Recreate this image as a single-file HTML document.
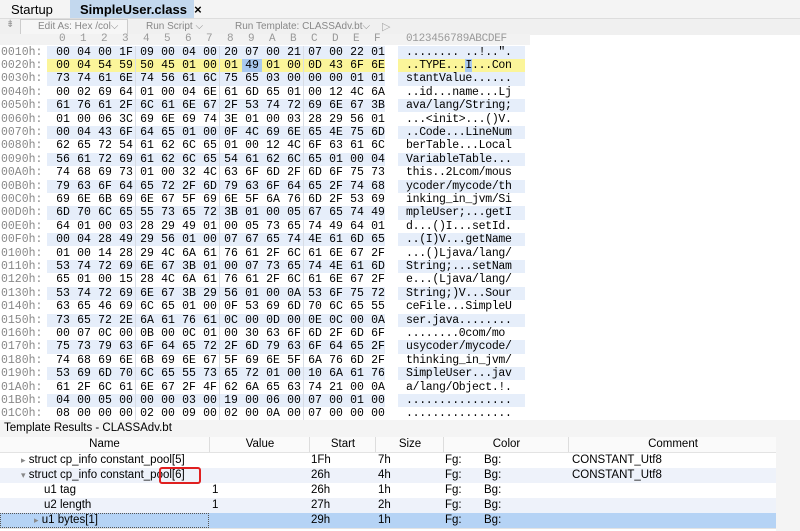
<!DOCTYPE html><html><head><style>
body{margin:0;width:800px;height:531px;overflow:hidden;background:#fff;font-family:"Liberation Sans",sans-serif;position:relative}
.a{position:absolute}
.m{font-family:"Liberation Mono",monospace;font-size:11.5px}
.row{position:absolute;left:0;width:530px;height:13.4px;line-height:13.4px}
.row .ad{position:absolute;left:1px;color:#888;width:44px}
.row .hx{position:absolute;left:47px;width:338px;height:13.4px}
.row .as{position:absolute;left:398px;width:127px;height:13.4px;padding-left:8px;box-sizing:border-box;letter-spacing:-0.3px}
.b .hx,.b .as{background:#e6eefa}
.y .hx,.y .as{background:#fbf59a}
.hx span{position:absolute;width:20px;text-align:center}
.tr{position:absolute;left:0;width:776px;height:15px;line-height:15px;font-size:11.5px;border-bottom:1px solid #e3e3e3}
.tr div{position:absolute;top:0}
</style></head><body>
<div class="a" style="left:0;top:0;width:800px;height:18px;background:#f4f4f4"></div>
<div class="a" style="left:11px;top:2px;font-size:13px">Startup</div>
<div class="a" style="left:70px;top:0;width:124px;height:18px;background:#c3d8ee"></div>
<div class="a" style="left:80px;top:2px;font-size:13px;font-weight:bold">SimpleUser.class &nbsp;×</div>
<div class="a" style="left:0;top:18px;width:800px;height:16px;background:#f0f0f0;border-top:1px solid #ddd"></div>
<div class="a" style="left:6px;top:19px;font-size:10px;color:#999">⇟</div>
<div class="a" style="left:20px;top:19px;width:106px;height:14px;border:1px solid #ccc;background:#f6f6f6"></div>
<div class="a" style="left:38px;top:21px;font-size:10px;color:#888">Edit As: Hex /col⌵</div>
<div class="a" style="left:146px;top:21px;font-size:10px;color:#888">Run Script ⌵</div>
<div class="a" style="left:235px;top:21px;font-size:10px;color:#888">Run Template: CLASSAdv.bt⌵</div>
<div class="a" style="left:382px;top:20px;font-size:11px;color:#aaa">▷</div>
<div class="a" style="left:0;top:34px;width:530px;height:11px;background:#f2f2f2"></div>
<div id="hdr" class="a m" style="left:0;top:33px;color:#999;font-size:11px"></div>
<div class="a m" style="left:406px;top:33px;color:#999;font-size:11px;letter-spacing:-0.3px">0123456789ABCDEF</div>
<div id="rows"></div>
<div class="a" style="left:0;top:420px;width:800px;height:111px;background:#f4f4f4"></div>
<div class="a" style="left:4px;top:422px;font-size:11.5px">Template Results - CLASSAdv.bt</div>
<div class="a" style="left:0;top:437px;width:776px;height:94px;background:#fff"></div>
<div class="tr" style="top:437px;background:#fafafa;text-align:center">
<div style="left:0;width:209px">Name</div><div style="left:209px;width:100px;border-left:1px solid #ddd">Value</div><div style="left:309px;width:66px;border-left:1px solid #ddd">Start</div><div style="left:375px;width:68px;border-left:1px solid #ddd">Size</div><div style="left:443px;width:125px;border-left:1px solid #ddd">Color</div><div style="left:568px;width:208px;border-left:1px solid #ddd">Comment</div></div>
<div id="trs"></div>
<div class="a" style="left:159px;top:467px;width:42px;height:17px;border:2px solid #e02020;border-radius:3px;box-sizing:border-box"></div>
<script>
var d=[["0010h","00 04 00 1F 09 00 04 00 20 07 00 21 07 00 22 01","........ ..!..\"."],
["0020h","00 04 54 59 50 45 01 00 01 49 01 00 0D 43 6F 6E","..TYPE...I...Con"],
["0030h","73 74 61 6E 74 56 61 6C 75 65 03 00 00 00 01 01","stantValue......"],
["0040h","00 02 69 64 01 00 04 6E 61 6D 65 01 00 12 4C 6A","..id...name...Lj"],
["0050h","61 76 61 2F 6C 61 6E 67 2F 53 74 72 69 6E 67 3B","ava/lang/String;"],
["0060h","01 00 06 3C 69 6E 69 74 3E 01 00 03 28 29 56 01","...<init>...()V."],
["0070h","00 04 43 6F 64 65 01 00 0F 4C 69 6E 65 4E 75 6D","..Code...LineNum"],
["0080h","62 65 72 54 61 62 6C 65 01 00 12 4C 6F 63 61 6C","berTable...Local"],
["0090h","56 61 72 69 61 62 6C 65 54 61 62 6C 65 01 00 04","VariableTable..."],
["00A0h","74 68 69 73 01 00 32 4C 63 6F 6D 2F 6D 6F 75 73","this..2Lcom/mous"],
["00B0h","79 63 6F 64 65 72 2F 6D 79 63 6F 64 65 2F 74 68","ycoder/mycode/th"],
["00C0h","69 6E 6B 69 6E 67 5F 69 6E 5F 6A 76 6D 2F 53 69","inking_in_jvm/Si"],
["00D0h","6D 70 6C 65 55 73 65 72 3B 01 00 05 67 65 74 49","mpleUser;...getI"],
["00E0h","64 01 00 03 28 29 49 01 00 05 73 65 74 49 64 01","d...()I...setId."],
["00F0h","00 04 28 49 29 56 01 00 07 67 65 74 4E 61 6D 65","..(I)V...getName"],
["0100h","01 00 14 28 29 4C 6A 61 76 61 2F 6C 61 6E 67 2F","...()Ljava/lang/"],
["0110h","53 74 72 69 6E 67 3B 01 00 07 73 65 74 4E 61 6D","String;...setNam"],
["0120h","65 01 00 15 28 4C 6A 61 76 61 2F 6C 61 6E 67 2F","e...(Ljava/lang/"],
["0130h","53 74 72 69 6E 67 3B 29 56 01 00 0A 53 6F 75 72","String;)V...Sour"],
["0140h","63 65 46 69 6C 65 01 00 0F 53 69 6D 70 6C 65 55","ceFile...SimpleU"],
["0150h","73 65 72 2E 6A 61 76 61 0C 00 0D 00 0E 0C 00 0A","ser.java........"],
["0160h","00 07 0C 00 0B 00 0C 01 00 30 63 6F 6D 2F 6D 6F","........0com/mo"],
["0170h","75 73 79 63 6F 64 65 72 2F 6D 79 63 6F 64 65 2F","usycoder/mycode/"],
["0180h","74 68 69 6E 6B 69 6E 67 5F 69 6E 5F 6A 76 6D 2F","thinking_in_jvm/"],
["0190h","53 69 6D 70 6C 65 55 73 65 72 01 00 10 6A 61 76","SimpleUser...jav"],
["01A0h","61 2F 6C 61 6E 67 2F 4F 62 6A 65 63 74 21 00 0A","a/lang/Object.!."],
["01B0h","04 00 05 00 00 00 03 00 19 00 06 00 07 00 01 00","................"],
["01C0h","08 00 00 00 02 00 09 00 02 00 0A 00 07 00 00 00","................"]];
var X=function(i){return 53+i*21};
var h="";for(var i=0;i<16;i++)h+='<span style="position:absolute;left:'+(X(i)+6)+'px">'+"0123456789ABCDEF"[i]+'</span>';
document.getElementById("hdr").innerHTML=h;
var s="";d.forEach(function(r,k){var c=k==1?"y":(k%2==0?"b":"");var t=45.5+k*13.4;
var hx="";r[1].split(" ").forEach(function(v,i){var st=(k==1&&i==9)?"background:#a9c9ef;":"";hx+='<span style="left:'+(X(i)-47)+'px;'+st+'">'+v+'</span>'});
for(var g=1;g<4;g++)hx+='<i style="position:absolute;left:'+(X(g*4)-47-2)+'px;top:0;width:1px;height:14px;background:#d8dde5"></i>';
var as=r[2].replace(/&/g,"&amp;").replace(/</g,"&lt;");
if(k==1)as='..TYPE...<b style="font-weight:normal;background:#a9c9ef">I</b>...Con';
s+='<div class="row m '+c+'" style="top:'+t+'px"><span class="ad">'+r[0]+':</span><div class="hx">'+hx+'</div><div class="as">'+as+'</div></div>'});
document.getElementById("rows").innerHTML=s;
var T=[["▸ struct cp_info constant_pool[5]",21,"","1Fh","7h","CONSTANT_Utf8",""],
["▾ struct cp_info constant_pool[6]",21,"","26h","4h","CONSTANT_Utf8","#eef2fa"],
["u1 tag",44,"1","26h","1h","",""],
["u2 length",44,"1","27h","2h","","#eef2fa"],
["▸ u1 bytes[1]",34,"","29h","1h","","#b5d3f5"]];
var q="";T.forEach(function(r,k){var t=453+k*15;
q+='<div class="tr" style="top:'+t+'px;background:'+(r[6]||"#fff")+'"><div style="left:'+r[1]+'px">'+r[0].replace(/^([▸▾])/,'<span style="color:#888;font-size:9px">$1</span>')+'</div><div style="left:212px">'+r[2]+'</div><div style="left:311px">'+r[3]+'</div><div style="left:378px">'+r[4]+'</div><div style="left:445px">Fg:</div><div style="left:484px">Bg:</div><div style="left:572px">'+r[5]+'</div>'+(k==4?'<i style="position:absolute;left:0;top:0;width:207px;height:13px;border:1px dotted #555"></i>':'')+'</div>'});
document.getElementById("trs").innerHTML=q;
</script>
</body></html>
